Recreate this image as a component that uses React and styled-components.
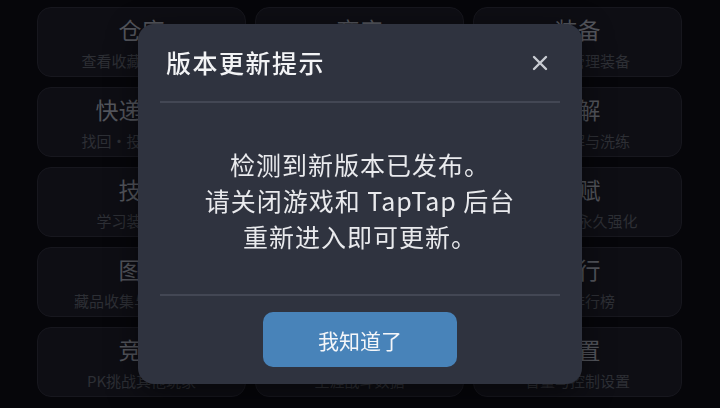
import React, { useState } from "react";
import styled, { createGlobalStyle } from "styled-components";

const menu = [
  { title: "仓库", sub: "查看收藏背包物品" },
  { title: "商店", sub: "购买道具" },
  { title: "装备", sub: "穿戴与管理装备" },
  { title: "快递中心", sub: "找回·投递与领取" },
  { title: "锻造", sub: "打造新装备" },
  { title: "分解", sub: "装备分解与洗练" },
  { title: "技能", sub: "学习装备技能" },
  { title: "任务", sub: "每日与主线任务" },
  { title: "天赋", sub: "角色属性永久强化" },
  { title: "图鉴", sub: "藏品收集与图鉴奖励" },
  { title: "成就", sub: "达成目标领奖励" },
  { title: "排行", sub: "全服排行榜" },
  { title: "竞技", sub: "PK挑战其他玩家" },
  { title: "统计", sub: "生涯战斗数据" },
  { title: "设置", sub: "音量与控制设置" },
];

const App = () => {
  const [open, setOpen] = useState(true);

  return (
    <>
      <GlobalStyle />
      <Page>
        <MenuGrid>
          {menu.map((item) => (
            <MenuCard key={item.title}>
              <CardTitle>{item.title}</CardTitle>
              <CardSub>{item.sub}</CardSub>
            </MenuCard>
          ))}
        </MenuGrid>
      </Page>
      {open && (
        <Overlay>
          <Dialog>
            <Header>
              <Title>版本更新提示</Title>
              <CloseButton aria-label="关闭" onClick={() => setOpen(false)}>
                <svg width="16" height="16" viewBox="0 0 16 16">
                  <path
                    d="M2 2 L14 14 M14 2 L2 14"
                    stroke="currentColor"
                    strokeWidth="2.4"
                    strokeLinecap="round"
                  />
                </svg>
              </CloseButton>
            </Header>
            <Divider />
            <Body>
              <Line>检测到新版本已发布。</Line>
              <Line>请关闭游戏和 TapTap 后台</Line>
              <Line>重新进入即可更新。</Line>
            </Body>
            <Divider />
            <Footer>
              <ConfirmButton onClick={() => setOpen(false)}>我知道了</ConfirmButton>
            </Footer>
          </Dialog>
        </Overlay>
      )}
    </>
  );
};

export default App;

const GlobalStyle = createGlobalStyle`
  html, body {
    margin: 0;
    padding: 0;
    background: #06060a;
    font-family: "Noto Sans CJK SC", "Noto Sans", sans-serif;
  }
  * {
    box-sizing: border-box;
  }
`;

const Page = styled.div`
  width: 720px;
  height: 408px;
  overflow: hidden;
  background: #06060a;
  padding: 7px 38px 0 37px;
`;

const MenuGrid = styled.div`
  display: grid;
  grid-template-columns: repeat(3, 1fr);
  grid-auto-rows: 70px;
  gap: 10px 9px;
`;

const MenuCard = styled.div`
  display: flex;
  flex-direction: column;
  align-items: center;
  justify-content: center;
  gap: 8px;
  background: #0e0e14;
  border: 1px solid #17171e;
  border-radius: 14px;
`;

const CardTitle = styled.div`
  font-size: 23px;
  line-height: 28px;
  color: #53555c;
  padding-top: 1px;
`;

const CardSub = styled.div`
  font-size: 15px;
  line-height: 20px;
  color: #2d2f35;
  white-space: nowrap;
`;

const Overlay = styled.div`
  position: fixed;
  inset: 0;
  display: flex;
  align-items: center;
  justify-content: center;
`;

const Dialog = styled.div`
  width: 444px;
  height: 360px;
  display: flex;
  flex-direction: column;
  padding: 0 22px;
  background: #2f333f;
  border-radius: 16px;
  box-shadow: 0 8px 30px rgba(0, 0, 0, 0.5);
`;

const Header = styled.div`
  height: 77px;
  display: flex;
  align-items: center;
  justify-content: space-between;
  padding: 0 8px 0 6px;
`;

const Title = styled.h2`
  margin: 0;
  font-size: 25px;
  font-weight: 500;
  color: #f2f3f5;
  letter-spacing: 1.5px;
  padding-bottom: 2px;
`;

const CloseButton = styled.button`
  width: 24px;
  height: 24px;
  display: flex;
  align-items: center;
  justify-content: center;
  padding: 0;
  border: none;
  background: none;
  color: #c9ccd2;
  cursor: pointer;
`;

const Divider = styled.div`
  height: 2px;
  background: #434754;
`;

const Body = styled.div`
  flex: 1;
  display: flex;
  flex-direction: column;
  align-items: center;
  justify-content: center;
  text-align: center;
  color: #e9eaed;
  padding-top: 2px;
`;

const Line = styled.div`
  font-size: 25px;
  line-height: 36px;
  letter-spacing: 1px;
  white-space: pre;
`;

const Footer = styled.div`
  height: 88px;
  display: flex;
  align-items: center;
  justify-content: center;
  padding-bottom: 1px;
`;

const ConfirmButton = styled.button`
  width: 194px;
  height: 55px;
  border: none;
  border-radius: 10px;
  background: #4883b9;
  color: #f4f6f9;
  font-family: inherit;
  font-size: 21px;
  cursor: pointer;
`;
